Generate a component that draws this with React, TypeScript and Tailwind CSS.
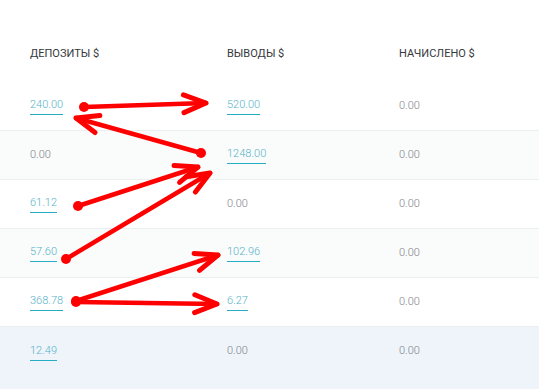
const rows = [
  { dep: '240.00', out: '520.00', acc: '0.00', depLink: true, outLink: true, bg: 'bg-white' },
  { dep: '0.00', out: '1248.00', acc: '0.00', depLink: false, outLink: true, bg: 'bg-[#fafbfb]' },
  { dep: '61.12', out: '0.00', acc: '0.00', depLink: true, outLink: false, bg: 'bg-white' },
  { dep: '57.60', out: '102.96', acc: '0.00', depLink: true, outLink: true, bg: 'bg-[#fafbfb]' },
  { dep: '368.78', out: '6.27', acc: '0.00', depLink: true, outLink: true, bg: 'bg-white' },
  { dep: '12.49', out: '0.00', acc: '0.00', depLink: true, outLink: false, bg: 'bg-[#eef4fa]' },
];

function Cell({ value, link }: { value: string; link: boolean }) {
  if (!link) return <span className="text-[#7f8489]">{value}</span>;
  return (
    <span className="inline-block leading-[14px] text-[#56b3c8] border-0 border-b border-solid border-b-[#26adc4] pb-[2px]">
      {value}
    </span>
  );
}

// стрелки поверх таблицы
const arrows = [
  { from: [84, 107], to: [206, 103] },
  { from: [201, 153], to: [76, 118] },
  { from: [78, 206], to: [198, 167] },
  { from: [66, 259], to: [210, 173] },
  { from: [76, 301], to: [218, 255] },
  { from: [76, 302], to: [217, 304] },
];

function Arrow({ from, to }: { from: number[]; to: number[] }) {
  const [x1, y1] = from;
  const [x2, y2] = to;
  const a = Math.atan2(y2 - y1, x2 - x1);
  const len = 24;
  const spread = 0.38;
  const w1 = [x2 - len * Math.cos(a - spread), y2 - len * Math.sin(a - spread)];
  const w2 = [x2 - len * Math.cos(a + spread), y2 - len * Math.sin(a + spread)];
  return (
    <g>
      <line x1={x1} y1={y1} x2={x2} y2={y2} stroke="#f00" strokeWidth={4.5} strokeLinecap="round" />
      <polyline
        points={`${w1[0]},${w1[1]} ${x2},${y2} ${w2[0]},${w2[1]}`}
        fill="none"
        stroke="#f00"
        strokeWidth={5}
        strokeLinecap="round"
        strokeLinejoin="round"
      />
      <circle cx={x1} cy={y1} r={5} fill="#f00" />
    </g>
  );
}

export default function App() {
  return (
    <div className="relative w-[539px] h-[389px] overflow-hidden bg-white font-['Roboto',sans-serif]">
      <div className="h-[82px] grid grid-cols-[197px_172px_1fr] pl-[30px] pt-[47px] text-[11px] leading-[13px] text-[#35383b] uppercase">
        <div>Депозиты $</div>
        <div>Выводы $</div>
        <div>Начислено $</div>
      </div>
      {rows.map((r, i) => (
        <div
          key={i}
          className={`grid grid-cols-[197px_172px_1fr] pl-[30px] items-center text-[11px] font-light ${r.bg} ${
            i === rows.length - 1 ? 'h-[62px] pb-[13px]' : 'h-[49px] border-b border-[#eceff1]'
          }`}
        >
          <div>
            <Cell value={r.dep} link={r.depLink} />
          </div>
          <div>
            <Cell value={r.out} link={r.outLink} />
          </div>
          <div>
            <Cell value={r.acc} link={false} />
          </div>
        </div>
      ))}
      <svg className="absolute inset-0 pointer-events-none" width={539} height={389}>
        {arrows.map((a, i) => (
          <Arrow key={i} from={a.from} to={a.to} />
        ))}
      </svg>
    </div>
  );
}
